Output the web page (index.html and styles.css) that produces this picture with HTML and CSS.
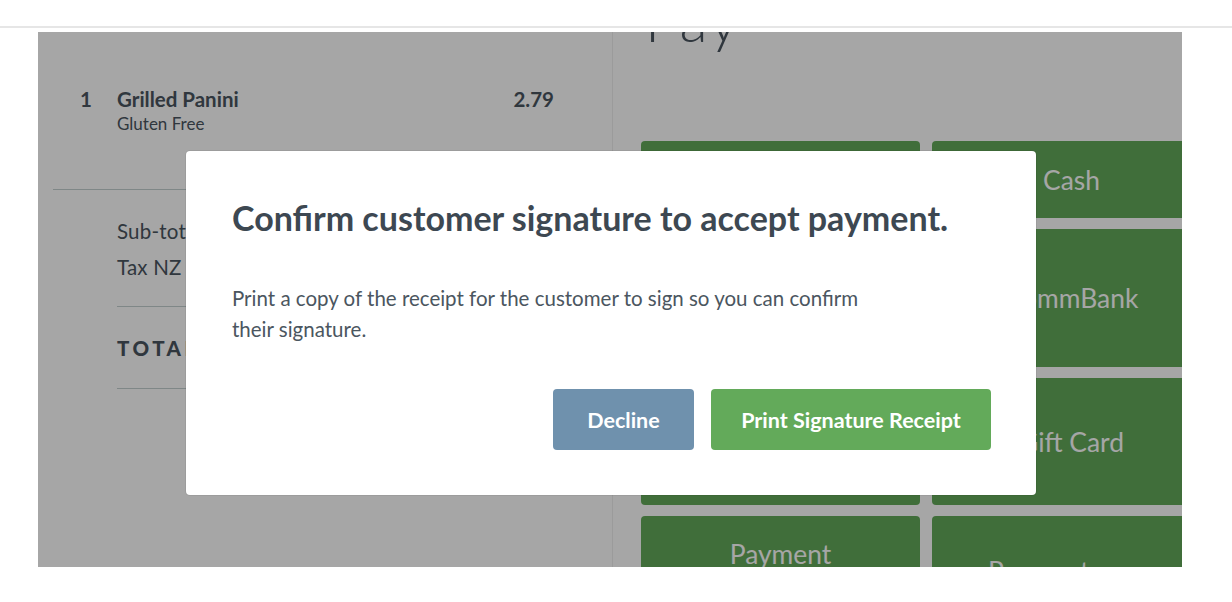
FILE: index.html
```html
<!DOCTYPE html>
<html lang="en">
<head>
<meta charset="utf-8">
<title>Pay</title>
<link rel="stylesheet" href="styles.css">
</head>
<body>
<header class="topbar"></header>
<main class="app">
  <section class="order">
    <div class="items">
      <div class="item">
        <span class="qty">1</span>
        <div class="item-info">
          <div class="item-name">Grilled Panini</div>
          <div class="item-mod">Gluten Free</div>
        </div>
        <span class="item-price">2.79</span>
      </div>
    </div>
    <div class="totals">
      <div class="sums">
        <div class="sum-row"><span>Sub-total</span><span>2.43</span></div>
        <div class="sum-row"><span>Tax NZ GST 15%</span><span>0.36</span></div>
      </div>
      <div class="grand"><span>TOTAL</span><span>2.79</span></div>
    </div>
  </section>
  <section class="pay">
    <h1 class="pay-title">Pay</h1>
    <div class="methods">
      <button class="method">Card</button>
      <button class="method">Cash</button>
      <button class="method">EFTPOS</button>
      <button class="method">CommBank</button>
      <button class="method">Voucher</button>
      <button class="method">Gift Card</button>
      <button class="method">Payment<br>Express</button>
      <button class="method">Paymentsense</button>
    </div>
  </section>
  <div class="overlay"></div>
  <div class="modal">
    <h2 class="modal-title">Confirm customer signature to accept payment.</h2>
    <p class="modal-text">Print a copy of the receipt for the customer to sign so you can confirm their signature.</p>
    <div class="modal-actions">
      <button class="btn btn-decline">Decline</button>
      <button class="btn btn-print">Print Signature Receipt</button>
    </div>
  </div>
</main>
</body>
</html>
```
FILE: styles.css
```css
* { box-sizing: border-box; }
html, body { margin: 0; padding: 0; background: #ffffff; }
body {
  font-family: Lato, "Noto Sans", "Liberation Sans", sans-serif;
  color: #4a5560;
  width: 1232px;
  height: 602px;
  overflow: hidden;
}
.topbar {
  height: 28px;
  border-bottom: 2px solid #e6e6e6;
}
.app {
  position: relative;
  margin: 4px 0 0 38px;
  width: 1144px;
  height: 535px;
  overflow: hidden;
  display: flex;
  background: #ffffff;
}
.order {
  flex: 0 0 575px;
  border-right: 1px solid #eeeeee;
}
.items {
  margin: 0 15px;
  padding: 55px 43px 55px 27px;
  border-bottom: 1px solid #c4cfcf;
}
.item {
  display: flex;
  align-items: flex-start;
}
.qty {
  width: 37px;
  font-weight: 700;
  font-size: 20.5px;
  line-height: 25px;
}
.item-info { flex: 1; }
.item-name {
  font-weight: 700;
  font-size: 20.5px;
  line-height: 25px;
}
.item-mod {
  font-size: 17px;
  line-height: 20px;
  margin-top: 2px;
}
.item-price {
  font-weight: 700;
  font-size: 20.5px;
  line-height: 25px;
}
.totals {
  margin: 0 58px 0 79px;
  padding-top: 23px;
}
.sums {
  padding-bottom: 21px;
  border-bottom: 1px solid #c4cfcf;
}
.sum-row {
  display: flex;
  justify-content: space-between;
  font-size: 20.5px;
  letter-spacing: 0.2px;
  line-height: 36px;
}
.grand {
  display: flex;
  justify-content: space-between;
  font-weight: 900;
  font-size: 20.5px;
  letter-spacing: 3.5px;
  line-height: 24px;
  padding: 29px 0 28px;
  border-bottom: 1px solid #c4cfcf;
}
.pay {
  flex: 1;
  padding-left: 28px;
  min-width: 0;
}
.pay-title {
  margin: -40px 0 0 4px;
  font-size: 58px;
  line-height: 56px;
  font-weight: 300;
  letter-spacing: 2px;
  color: #4a5560;
}
.methods {
  margin-top: 93px;
  display: grid;
  grid-template-columns: 279px 279px;
  grid-template-rows: 77px 138px 127px 110px;
  column-gap: 12px;
  row-gap: 11px;
}
.method {
  border: 0;
  border-radius: 4px;
  background: #63aa5a;
  color: #ffffff;
  font-family: inherit;
  font-size: 26.4px;
  line-height: 34px;
  padding: 0 10px;
}
.overlay {
  position: absolute;
  inset: 0;
  background: rgba(0, 0, 0, 0.35);
}
.modal {
  position: absolute;
  left: 148px;
  top: 119px;
  width: 850px;
  background: #ffffff;
  border-radius: 4px;
  box-shadow: 0 0 0 1px rgba(0, 0, 0, 0.06);
  padding: 47px 45px 45px 46px;
}
.modal-title {
  margin: 0;
  font-size: 34px;
  line-height: 40px;
  font-weight: 700;
  color: #3d4852;
}
.modal-text {
  margin: 45px 0 0;
  max-width: 660px;
  font-size: 20.5px;
  line-height: 31px;
  color: #4b5660;
}
.modal-actions {
  margin-top: 44px;
  display: flex;
  justify-content: flex-end;
  gap: 17px;
}
.btn {
  height: 61px;
  border: 0;
  border-radius: 4px;
  color: #ffffff;
  font-family: inherit;
  font-weight: 700;
  font-size: 21.5px;
  padding: 0 30px;
}
.btn-decline {
  background: #6f91ad;
  min-width: 141px;
}
.btn-print {
  background: #63aa5a;
  min-width: 280px;
}
```
